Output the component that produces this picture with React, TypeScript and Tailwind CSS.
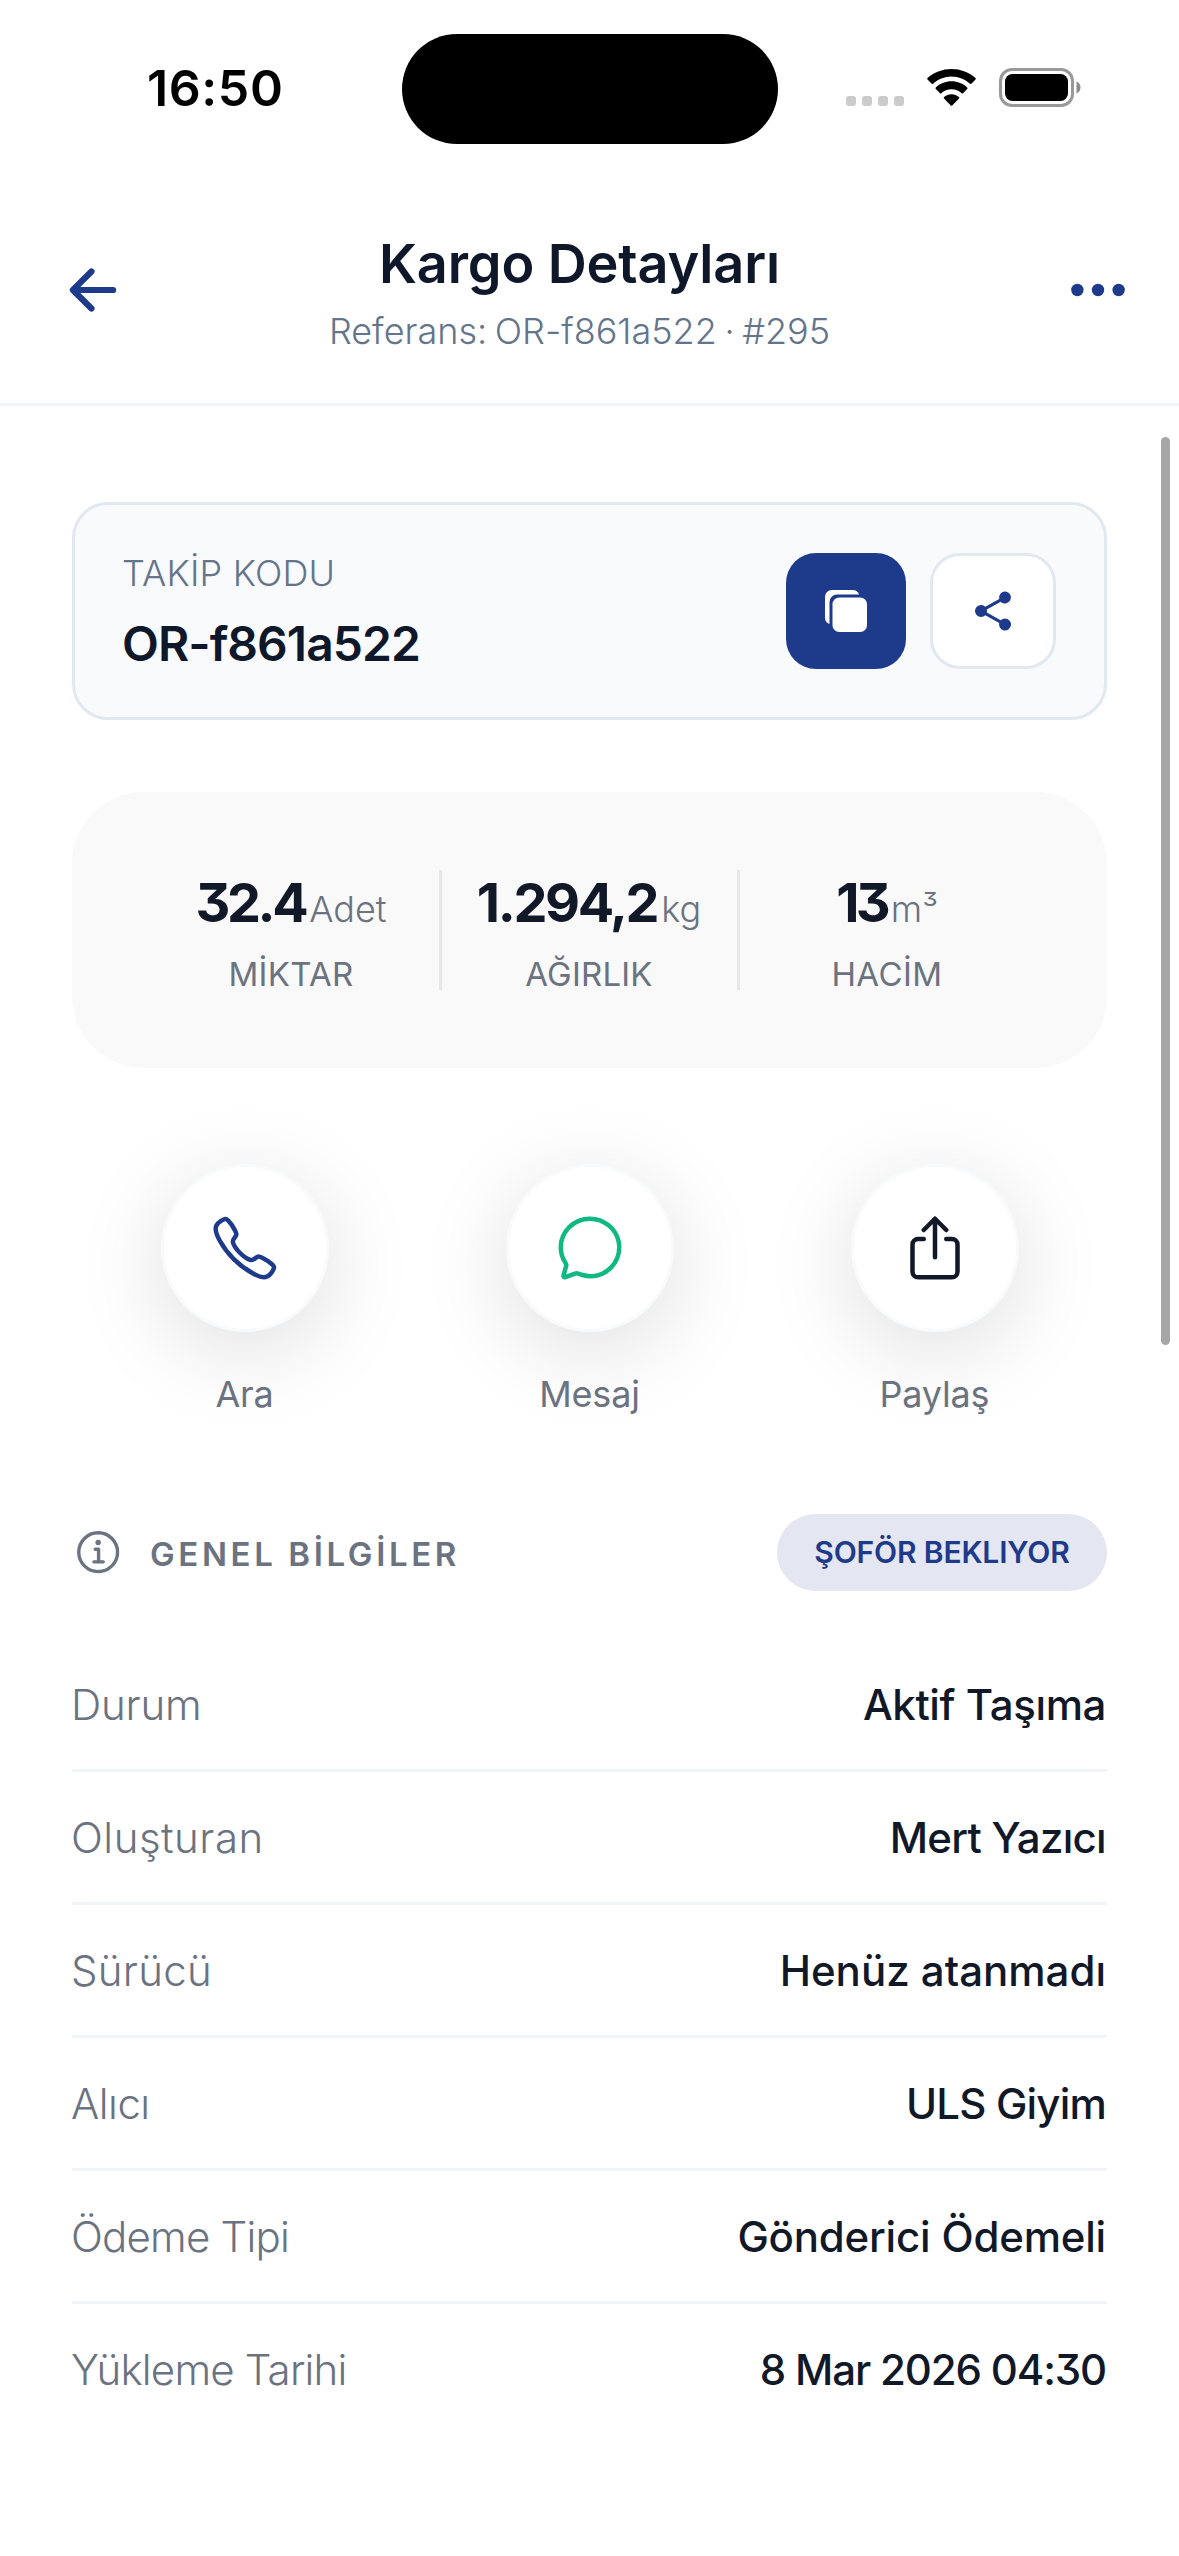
import {
  IoArrowBack,
  IoCallOutline,
  IoChatbubbleOutline,
  IoCopy,
  IoEllipsisHorizontal,
  IoInformationCircleOutline,
  IoShareOutline,
  IoShareSocial,
} from 'react-icons/io5';

const stats = [
  { value: '32.4', unit: 'Adet', label: 'MİKTAR', tracking: 'tracking-[-3.4px]', labelTracking: 'tracking-[0.3px]' },
  { value: '1.294,2', unit: 'kg', label: 'AĞIRLIK', tracking: 'tracking-[-2.4px]', labelTracking: 'tracking-[0.2px]' },
  { value: '13', unit: 'm³', label: 'HACİM', tracking: 'tracking-[-3.8px]', labelTracking: 'tracking-[0.45px]' },
];

const actions = [
  { label: 'Ara', icon: IoCallOutline, color: 'text-[#1e3a8a]' },
  { label: 'Mesaj', icon: IoChatbubbleOutline, color: 'text-[#10b981]' },
  { label: 'Paylaş', icon: IoShareOutline, color: 'text-[#111827]' },
];

const rows = [
  { label: 'Durum', value: 'Aktif Taşıma', l: 'tracking-[-0.2px]', v: 'tracking-[-0.4px]' },
  { label: 'Oluşturan', value: 'Mert Yazıcı', l: 'tracking-[0.5px]', v: 'tracking-[-0.7px]' },
  { label: 'Sürücü', value: 'Henüz atanmadı', l: 'tracking-[0.3px]', v: 'tracking-[0px]' },
  { label: 'Alıcı', value: 'ULS Giyim', l: 'tracking-[-0.5px]', v: 'tracking-[-0.8px]' },
  { label: 'Ödeme Tipi', value: 'Gönderici Ödemeli', l: 'tracking-[-0.8px]', v: 'tracking-[-0.2px]' },
  { label: 'Yükleme Tarihi', value: '8 Mar 2026 04:30', l: 'tracking-[-0.8px]', v: 'tracking-[-1.15px]' },
];

function StatusBar() {
  return (
    <div className="grid grid-cols-[402px_376px_1fr] items-center h-[178px] text-black">
      <div className="pl-[147px] pb-[2px] text-[50px] leading-none font-semibold tracking-[0.6px]">16:50</div>
      <div className="h-[110px] rounded-full bg-black" />
      <div className="flex items-center pl-[68px] pb-[3px]">
        <div className="flex gap-[6px] mt-[27px]">
          {[0, 1, 2, 3].map((i) => (
            <span key={i} className="w-[10px] h-[10px] rounded-[3px] bg-[#cbcbcb]" />
          ))}
        </div>
        <svg className="ml-[22px] w-[51px] h-[37px]" viewBox="0 0 51 37" fill="currentColor">
          <path d="M25.5 7.4c7.2 0 13.7 2.8 18.5 7.4.4.3.9.3 1.3 0l4.2-4.3c.4-.4.4-1 0-1.4C43.3 3.4 34.8 0 25.5 0S7.7 3.4 1.5 9.1c-.4.4-.4 1 0 1.4l4.2 4.3c.4.3.9.3 1.3 0C11.8 10.2 18.3 7.4 25.5 7.4z" />
          <path d="M25.5 20.2c3.9 0 7.5 1.5 10.2 4 .4.3.9.3 1.3 0l4.2-4.3c.4-.4.4-1 0-1.4-4.1-3.9-9.6-6.2-15.7-6.2s-11.6 2.3-15.7 6.2c-.4.4-.4 1 0 1.4l4.2 4.3c.4.3.9.3 1.3 0 2.7-2.5 6.3-4 10.2-4z" />
          <path d="M33 28c.4.4.4 1 0 1.4l-6.8 7c-.4.4-1 .4-1.4 0l-6.8-7c-.4-.4-.4-1 0-1.4 2-1.7 4.6-2.8 7.5-2.8s5.5 1.1 7.5 2.8z" />
        </svg>
        <svg className="ml-[22px] w-[82px] h-[39px]" viewBox="0 0 82 39">
          <rect x="1.5" y="1.5" width="72" height="36" rx="11.5" fill="none" stroke="#999" strokeWidth="3" />
          <rect x="6" y="6" width="63" height="27" rx="7.5" fill="#000" />
          <path d="M77.5 13.5c2.4 1 4 3.3 4 6s-1.6 5-4 6z" fill="#8c8c8c" />
        </svg>
      </div>
    </div>
  );
}

function Header() {
  return (
    <header className="flex items-center h-[228px] border-b-[3px] border-[#f1f5f9] text-[#1e3a8a]">
      <button className="w-[116px] pl-[60px] pb-[1px]">
        <IoArrowBack className="w-[66px] h-[66px]" />
      </button>
      <div className="flex-1 flex flex-col items-center gap-[13px] pt-[1px]">
        <h1 className="text-[54px] leading-[66px] font-semibold tracking-[-0.13px] text-[#0f172a]">Kargo Detayları</h1>
        <p className="text-[36px] leading-[42px] font-light [word-spacing:-2.5px] text-[#64748b]">
          Referans: OR-f861a522 · #295
        </p>
      </div>
      <button className="w-[136px] pl-[22px] pb-[1px]">
        <IoEllipsisHorizontal className="w-[66px] h-[66px]" />
      </button>
    </header>
  );
}

function TrackingCard() {
  return (
    <section className="mt-24 flex items-center justify-between h-[218px] pl-[47px] pr-12 rounded-[36px] border-[3px] border-[#e2e8f0] bg-[#f8fafc]">
      <div className="flex flex-col gap-[18px]">
        <span className="text-[36px] leading-[48px] font-light tracking-[0.2px] text-[#64748b]">TAKİP KODU</span>
        <span className="text-[48px] leading-[58px] font-semibold tracking-[-0.96px] text-[#0f172a]">OR-f861a522</span>
      </div>
      <div className="flex gap-6">
        <button className="flex items-center justify-center w-[120px] h-[116px] rounded-[30px] bg-[#1e3a8a] text-white">
          <IoCopy className="w-12 h-12" />
        </button>
        <button className="flex items-center justify-center w-[126px] h-[116px] rounded-[30px] border-[3px] border-[#e2e8f0] bg-white text-[#1e3a8a]">
          <IoShareSocial className="w-12 h-12" />
        </button>
      </div>
    </section>
  );
}

function Stats() {
  return (
    <section className="mt-[72px] flex items-center h-[276px] px-[72px] rounded-[72px] bg-[#f9f9f9]">
      {stats.map((s, i) => (
        <div key={s.label} className="contents">
          {i > 0 && <div className="w-[3px] h-[120px] bg-[#e5e7eb]" />}
          <div className="flex-1 flex flex-col items-center gap-[18px] pr-[1px]">
            <div className="flex items-baseline leading-[69px]">
              <span className={`text-[54px] font-bold text-[#111827] ${s.tracking}`}>{s.value}</span>
              <span className="ml-[4px] text-[36px] leading-none font-light text-[#6b7280]">{s.unit}</span>
            </div>
            <span className={`text-[33px] leading-[38px] text-[#6b7280] ${s.labelTracking}`}>{s.label}</span>
          </div>
        </div>
      ))}
    </section>
  );
}

function Actions() {
  return (
    <section className="mt-24 grid grid-cols-3">
      {actions.map(({ label, icon: Icon, color }) => (
        <div key={label} className="flex flex-col items-center gap-[38px]">
          <button
            className={`flex items-center justify-center w-[168px] h-[168px] rounded-full border-[3px] border-[#f9fafb] bg-white shadow-[0_18px_90px_rgba(0,0,0,0.13)] ${color}`}
          >
            <Icon className="w-[72px] h-[72px]" />
          </button>
          <span className="text-[36px] leading-[48px] tracking-[-0.2px] text-[#6b7280]">{label}</span>
        </div>
      ))}
    </section>
  );
}

function GeneralInfo() {
  return (
    <section className="mt-24">
      <div className="flex items-center justify-between">
        <div className="flex items-center gap-6 text-[#6b7280]">
          <IoInformationCircleOutline className="w-[54px] h-[54px]" />
          <h2 className="pt-[3px] text-[33px] leading-[40px] font-semibold tracking-[3.61px]">GENEL BİLGİLER</h2>
        </div>
        <span className="flex items-center justify-center w-[330px] h-[77px] rounded-full bg-[#e4e6f1] text-[30px] font-semibold tracking-[-0.15px] text-[#1e3a8a]">
          ŞOFÖR BEKLIYOR
        </span>
      </div>
      <div className="mt-12">
        {rows.map((r) => (
          <div
            key={r.label}
            className="flex items-center justify-between h-[133px] border-b-[3px] border-[#f1f5f9] last:border-transparent text-[42px]"
          >
            <span className={`-ml-[1px] font-light text-[#6b7280] ${r.l}`}>{r.label}</span>
            <span className={`mr-[1px] font-medium text-[#111827] ${r.v}`}>{r.value}</span>
          </div>
        ))}
      </div>
    </section>
  );
}

export default function App() {
  return (
    <div className="relative w-[1179px] h-[2556px] overflow-hidden bg-white font-['Inter',sans-serif] [font-feature-settings:'cv09']">
      <StatusBar />
      <Header />
      <main className="px-[72px]">
        <TrackingCard />
        <Stats />
        <Actions />
        <GeneralInfo />
      </main>
      {/* scroll indicator floating over the content */}
      <div className="absolute right-[9px] top-[437px] w-[9px] h-[908px] rounded-full bg-[#a6a6a6]" />
    </div>
  );
}
